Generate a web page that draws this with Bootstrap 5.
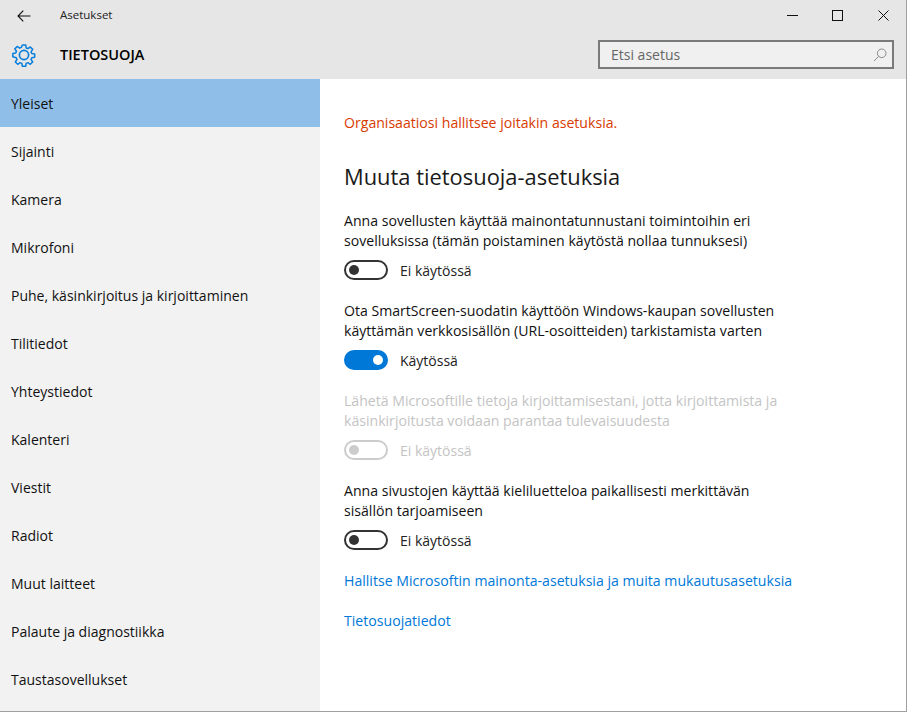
<!DOCTYPE html>
<html lang="fi">
<head>
<meta charset="utf-8">
<title>Asetukset</title>
<link href="https://cdn.jsdelivr.net/npm/bootstrap@5.3.0/dist/css/bootstrap.min.css" rel="stylesheet">
<style>
html,body{height:100%;margin:0;overflow:hidden;background:#fff}
body{font-family:"Open Sans","Noto Sans",sans-serif;font-size:14px;color:#000}
.win{width:907px;height:712px;border-right:1px solid #a0a0a0;border-bottom:1px solid #a0a0a0;display:flex;flex-direction:column}
.topband{background:#e6e6e6;height:79px;flex:none}
.tbar{height:31px}
.backbtn{width:48px;height:30px}
.tbar-title{font-size:11.5px;margin-left:12px;color:#222;padding-bottom:2px}
.winbtn{width:45.5px;height:31px}
.hdr{height:48px;padding-left:12px}
.hdr-title{font-size:14.5px;font-weight:600;margin-left:24px;color:#000}
.searchbox{width:296px;height:29px;border:2px solid #7a7a7a;background:#f0f0f0;margin-right:12px;padding:0 5px 0 11px;color:#666;margin-top:-1px}
.sidepane{width:320px;background:#f2f2f2;flex:none}
.sideitem{height:48px;padding:2px 0 0 11px;display:flex;align-items:center;font-size:14.02px;color:#111}
.sideitem.sel{background:#8fbfe8}
.mainpane{padding:0 0 0 24px;flex:1}
.orgnote{color:#d83b01;font-size:14.1px;margin-top:34px;line-height:20px}
.secthead{font-size:21.9px;font-weight:400;line-height:28px;margin:30px 0 0;color:#1a1a1a}
.desc{font-size:14.1px;line-height:20.5px;width:470px;color:#111;padding-top:.5px}
.sett{margin-top:20px}
.sett.first{margin-top:19px}
.togrow{height:20px;margin-top:8.5px;font-size:14px;color:#222}
.tog{width:44px;height:20px;border-radius:10px;border:2px solid #333;position:relative;flex:none;margin-right:12px}
.tog::after{content:"";position:absolute;width:10px;height:10px;border-radius:50%;background:#333;left:3px;top:3px}
.tog.on{background:#0078d7;border-color:#0078d7}
.tog.on::after{background:#fff;left:auto;right:3px}
.tog.off{border-color:#ccc}
.tog.off::after{background:#ccc}
.dim{color:#c4c4c4}
.lnk{display:block;color:#0078d7;font-size:14.12px;text-decoration:none;line-height:20px}
.lnk.firstlink{margin-top:21px}
</style>
</head>
<body>
<div class="win">
  <div class="topband">
    <div class="tbar d-flex align-items-center">
      <div class="backbtn d-flex align-items-center justify-content-center">
        <svg width="14" height="12" viewBox="0 0 14 12" fill="none" stroke="#111" stroke-width="1.1"><path d="M13.5 6H1M6.3.7 1 6l5.3 5.3"/></svg>
      </div>
      <div class="tbar-title">Asetukset</div>
      <div class="ms-auto d-flex">
        <div class="winbtn d-flex align-items-center justify-content-center"><svg width="11" height="11" viewBox="0 0 11 11"><path d="M0 5.5h11" stroke="#111" stroke-width="1"/></svg></div>
        <div class="winbtn d-flex align-items-center justify-content-center"><svg width="11" height="11" viewBox="0 0 11 11"><rect x=".5" y=".5" width="10" height="10" fill="none" stroke="#111"/></svg></div>
        <div class="winbtn d-flex align-items-center justify-content-center"><svg width="11" height="11" viewBox="0 0 11 11"><path d="M.5.5l10 10M10.5.5l-10 10" stroke="#111" stroke-width="1"/></svg></div>
      </div>
    </div>
    <div class="hdr d-flex align-items-center">
      <svg width="24" height="24" viewBox="0 0 24 24" fill="none" stroke="#0a7fdc" stroke-width="1.7" stroke-linejoin="round"><circle cx="12" cy="12" r="4.6"/><path d="M10.2 1h3.6l.6 3.2 1.8.8 2.7-1.8 2.6 2.6-1.8 2.7.8 1.8 3.2.6v3.6l-3.2.6-.8 1.8 1.8 2.7-2.6 2.6-2.7-1.8-1.8.8-.6 3.2h-3.6l-.6-3.2-1.8-.8-2.7 1.8-2.6-2.6 1.8-2.7-.8-1.8L-.3 13.9v-3.6l3.2-.6.8-1.8L1.9 5.2l2.6-2.6 2.7 1.8 1.8-.8z" transform="translate(1.1 1.1) scale(.91)"/></svg>
      <div class="hdr-title">TIETOSUOJA</div>
      <div class="searchbox ms-auto d-flex align-items-center justify-content-between">
        <span>Etsi asetus</span>
        <svg width="14" height="14" viewBox="0 0 14 14" fill="none" stroke="#8a8a8a" stroke-width="1"><circle cx="8.7" cy="5.3" r="4.3"/><path d="M5.6 8.4 1 13"/></svg>
      </div>
    </div>
  </div>
  <div class="d-flex flex-grow-1 overflow-hidden">
    <div class="sidepane">
      <div class="sideitem sel">Yleiset</div>
      <div class="sideitem">Sijainti</div>
      <div class="sideitem">Kamera</div>
      <div class="sideitem">Mikrofoni</div>
      <div class="sideitem">Puhe, käsinkirjoitus ja kirjoittaminen</div>
      <div class="sideitem">Tilitiedot</div>
      <div class="sideitem">Yhteystiedot</div>
      <div class="sideitem">Kalenteri</div>
      <div class="sideitem">Viestit</div>
      <div class="sideitem">Radiot</div>
      <div class="sideitem">Muut laitteet</div>
      <div class="sideitem">Palaute ja diagnostiikka</div>
      <div class="sideitem">Taustasovellukset</div>
    </div>
    <div class="mainpane">
      <div class="orgnote">Organisaatiosi hallitsee joitakin asetuksia.</div>
      <h2 class="secthead">Muuta tietosuoja-asetuksia</h2>
      <div class="sett first">
        <div class="desc">Anna sovellusten käyttää mainontatunnustani toimintoihin eri<br>sovelluksissa (tämän poistaminen käytöstä nollaa tunnuksesi)</div>
        <div class="togrow d-flex align-items-center"><span class="tog"></span>Ei käytössä</div>
      </div>
      <div class="sett">
        <div class="desc">Ota SmartScreen-suodatin käyttöön Windows-kaupan sovellusten<br>käyttämän verkkosisällön (URL-osoitteiden) tarkistamista varten</div>
        <div class="togrow d-flex align-items-center"><span class="tog on"></span>Käytössä</div>
      </div>
      <div class="sett">
        <div class="desc dim">Lähetä Microsoftille tietoja kirjoittamisestani, jotta kirjoittamista ja<br>käsinkirjoitusta voidaan parantaa tulevaisuudesta</div>
        <div class="togrow d-flex align-items-center dim"><span class="tog off"></span>Ei käytössä</div>
      </div>
      <div class="sett">
        <div class="desc">Anna sivustojen käyttää kieliluetteloa paikallisesti merkittävän<br>sisällön tarjoamiseen</div>
        <div class="togrow d-flex align-items-center"><span class="tog"></span>Ei käytössä</div>
      </div>
      <a class="lnk firstlink" href="#">Hallitse Microsoftin mainonta-asetuksia ja muita mukautusasetuksia</a>
      <a class="lnk sett" href="#">Tietosuojatiedot</a>
    </div>
  </div>
</div>
</body>
</html>
